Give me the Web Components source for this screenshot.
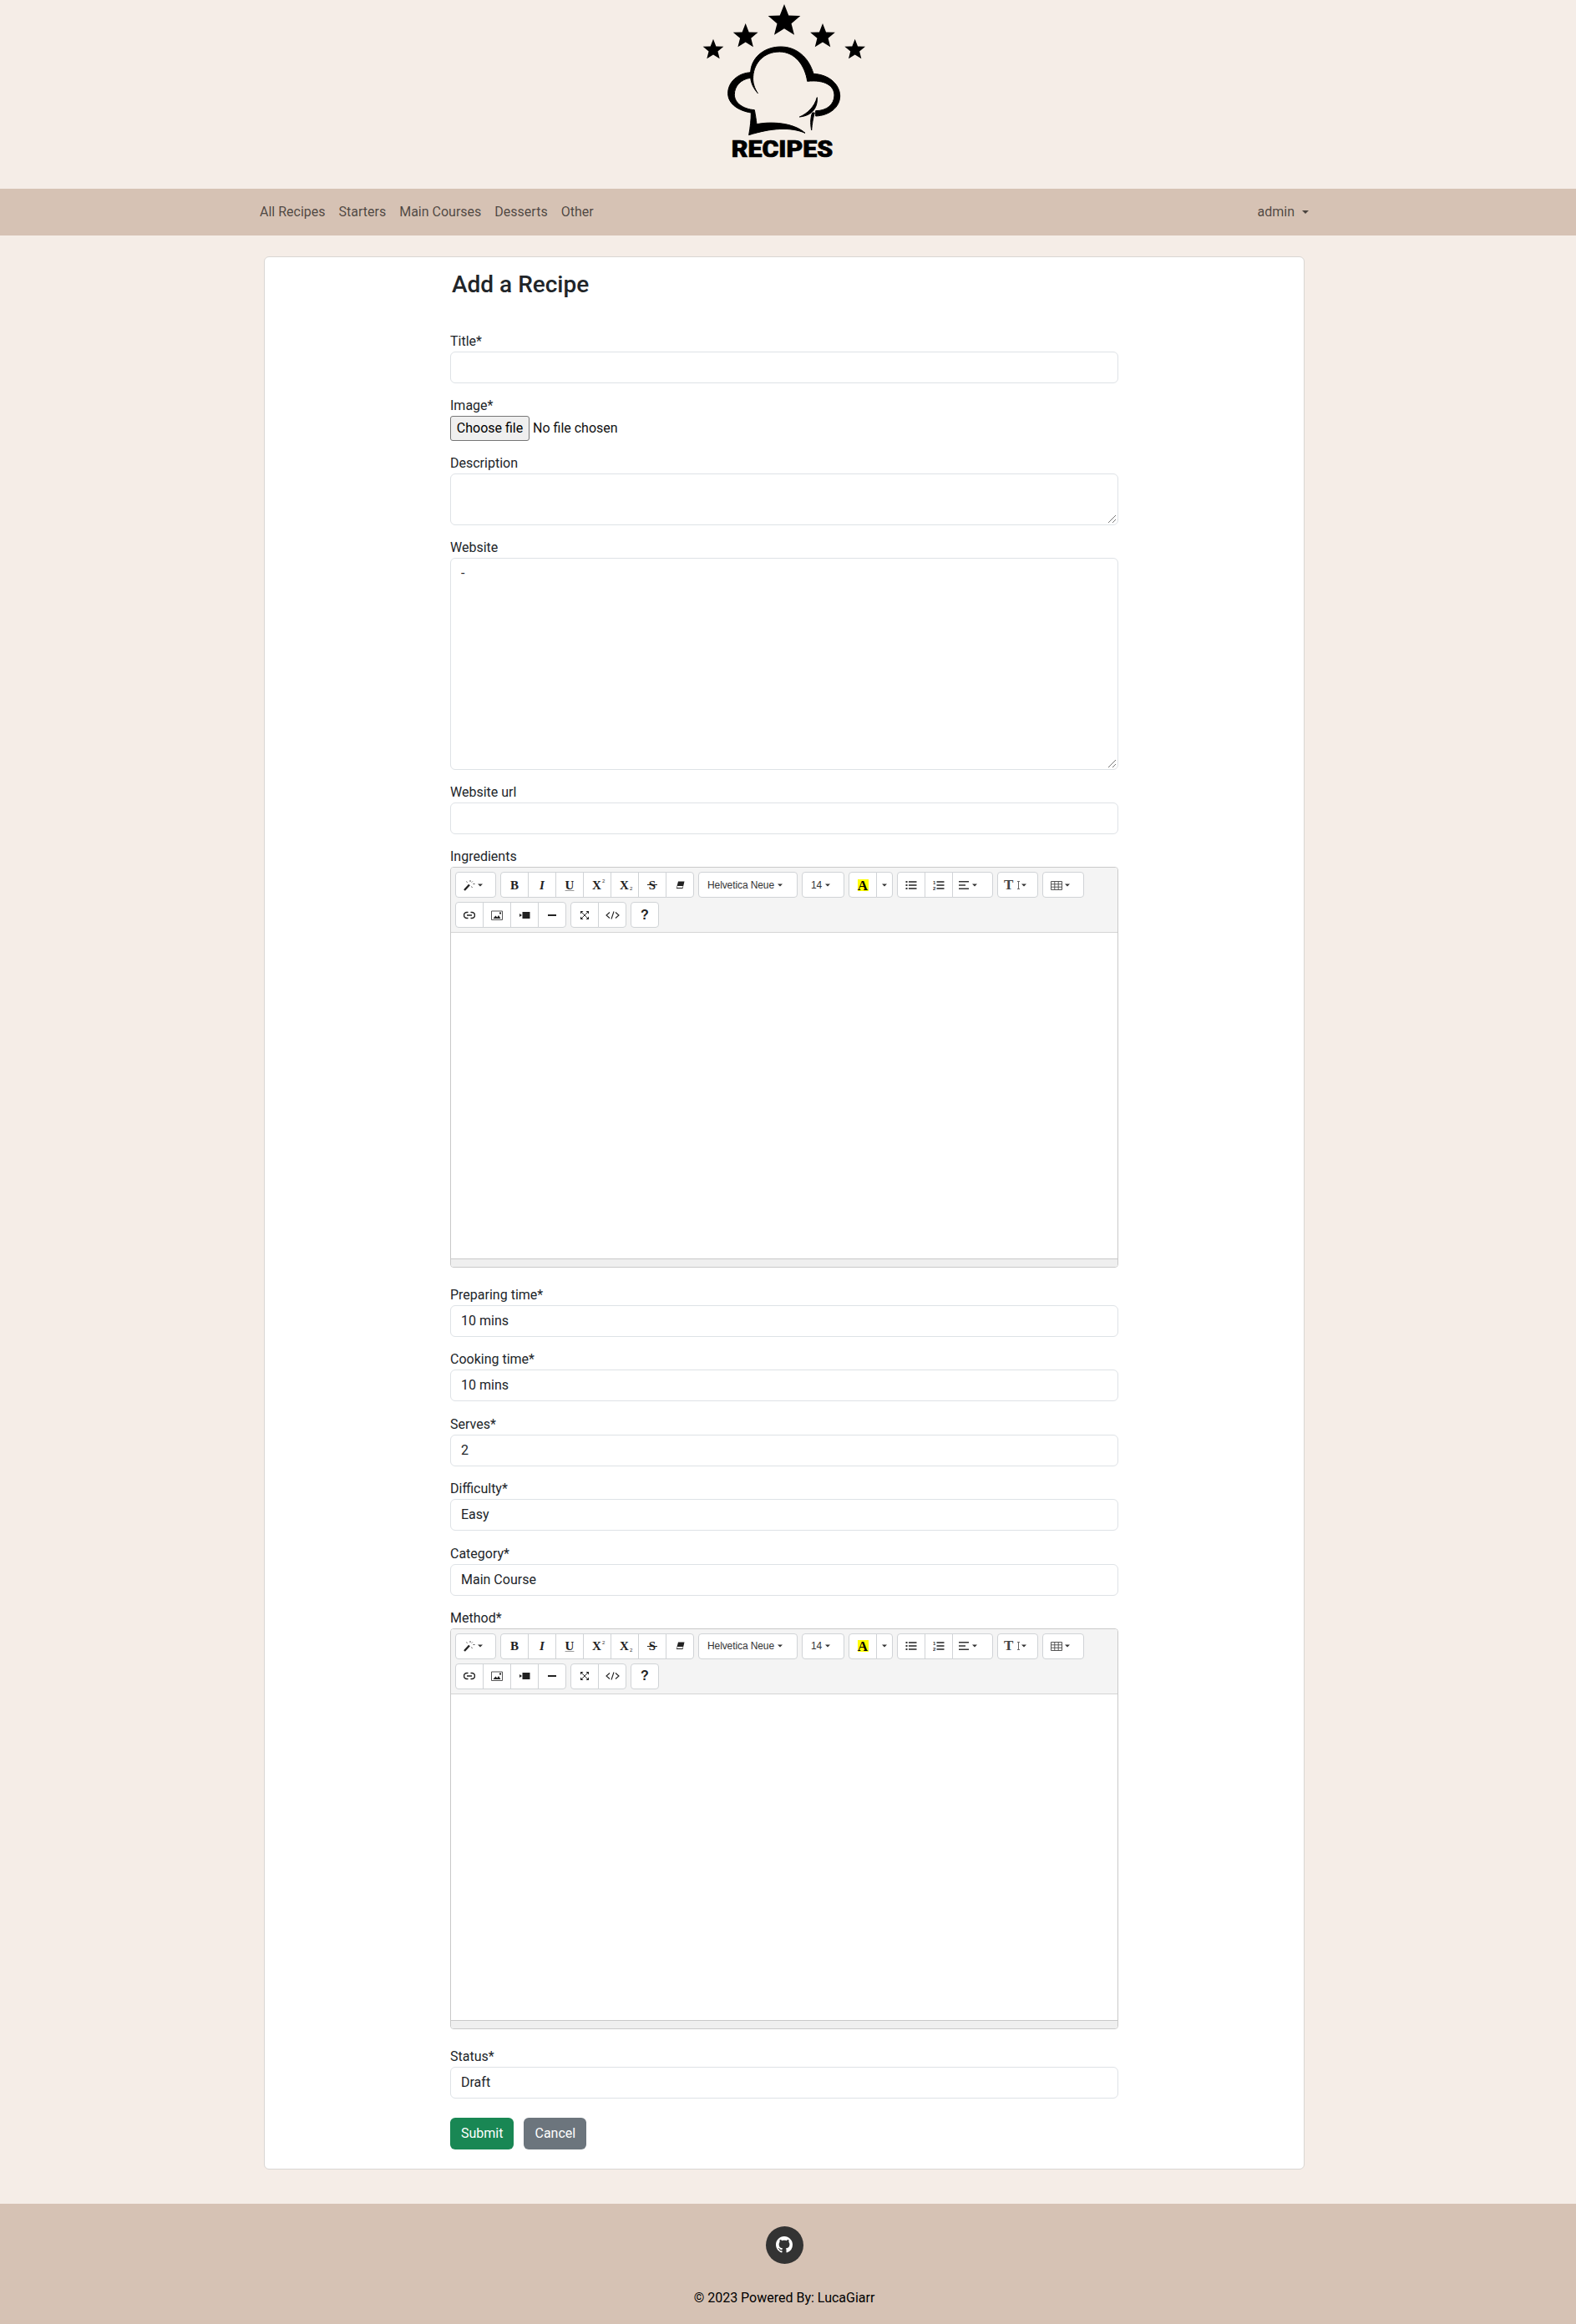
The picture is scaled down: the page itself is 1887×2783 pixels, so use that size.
<!DOCTYPE html>
<html lang="en">
<head>
<meta charset="utf-8">
<title>Add a Recipe</title>
<style>
  html, body { margin: 0; background: #f5ede7; }
  body { font: 16px/24px Roboto, "Liberation Sans", sans-serif; color: #212529; }
  /* the lower rows of the form sit a little further apart */
  .wide { margin-bottom: 15.4px; }
</style>
</head>
<body>
<recipe-header></recipe-header>
<recipe-nav>
  <nav-link>All Recipes</nav-link>
  <nav-link>Starters</nav-link>
  <nav-link>Main Courses</nav-link>
  <nav-link>Desserts</nav-link>
  <nav-link>Other</nav-link>
</recipe-nav>
<recipe-card>
  <form-field label="Title*"></form-field>
  <file-field label="Image*"></file-field>
  <form-field label="Description" area="62"></form-field>
  <form-field label="Website" area="254" value="-"></form-field>
  <form-field label="Website url"></form-field>
  <rich-editor label="Ingredients"></rich-editor>
  <form-field class="wide" label="Preparing time*" value="10 mins"></form-field>
  <form-field class="wide" label="Cooking time*" value="10 mins"></form-field>
  <form-field class="wide" label="Serves*" value="2"></form-field>
  <form-field class="wide" label="Difficulty*" value="Easy"></form-field>
  <form-field class="wide" label="Category*" value="Main Course"></form-field>
  <rich-editor label="Method*"></rich-editor>
  <form-field label="Status*" value="Draft"></form-field>
  <form-actions></form-actions>
</recipe-card>
<recipe-footer></recipe-footer>

<script>
  const caret = `<svg class="caret" width="6" height="4" viewBox="0 0 6 4"><path d="M0 .5h6L3 3.5z" fill="#333"/></svg>`;

  // toolbar icons, drawn on a 14px grid
  const icon = (body, w = 14, h = 14) =>
    `<svg width="${w}" height="${h}" viewBox="0 0 ${w} ${h}" fill="none">${body}</svg>`;

  const icons = {
    magic: icon(`<path d="M1 13l6-6.5" stroke="#222" stroke-width="2.4"/>
      <path d="M8 1v2M3.5 2.5l1 1.3M11.5 5.5h2M9.5 8.5l1 1.500M10.800 2.500l-1 1" stroke="#555"/>`),
    eraser: icon(`<path d="M5 2.5h7.5l-2 8.5H2.800z" fill="#222"/><path d="M4 8h6.800l-.7 2H3.500z" fill="#fff"/>`),
    link: icon(`<path d="M5.5 3.500H4a3.200 3.200 0 0 0 0 7h1.500M8.500 3.500H10a3.200 3.200 0 0 1 0 7H8.500M4 7h6" stroke="#222" stroke-width="1.5"/>`),
    picture: icon(`<path d="M.5 2h13v10.500H.5z" stroke="#555"/><path d="M2.5 11l2.800-3.500 2 2 1.700-2.500 2.500 4z" fill="#222"/><path d="M10 3.500h2v2h-2z" fill="#222"/>`),
    video: icon(`<path d="M1 5l3 2-3 2z" fill="#222"/><path d="M4.500 3h9v8h-9z" fill="#222"/>`),
    minus: icon(`<path d="M2 6h10v2H2z" fill="#222"/>`),
    expand: icon(`<path d="M3.500 3.500l7 7M10.500 3.500l-7 7" stroke="#333"/>
      <path d="M2 2h3.500L2 5.500zM12 2H8.500L12 5.500zM2 12h3.500L2 8.500zM12 12H8.500L12 8.500z" fill="#222"/>`),
    code: icon(`<path d="M5 3.500L1 7l4 3.500M12 3.500L16 7l-4 3.500M10 2.500L7 11.500" stroke="#222" stroke-width="1.1"/>`, 17),
    ul: icon(`<path d="M.5 2h2v2h-2zM.5 6h2v2h-2zM.5 10h2v2h-2z" fill="#333"/><path d="M4 3h9.500M4 7h9.500M4 11h9.500" stroke="#222" stroke-width="1.7"/>`),
    ol: icon(`<text x="0" y="6" font-size="6" font-weight="700" font-family="Liberation Sans" fill="#333">1</text>
      <text x="0" y="13" font-size="6" font-weight="700" font-family="Liberation Sans" fill="#333">2</text>
      <path d="M4.500 3h9M4.500 7h9M4.500 11h9" stroke="#222" stroke-width="1.7"/>`),
    align: icon(`<path d="M1 2.800h12M1 7h8M1 11.200h12" stroke="#333" stroke-width="1.5"/>`),
    table: icon(`<path d="M.5 2.500h13v10H.5zM.5 5.800h13M.5 9.200h13M4.800 2.500v10M9.200 2.500v10" stroke="#555"/>`),
    updown: icon(`<path d="M2 2.500h3M3.500 2.500v9M2 11.500h3" stroke="#666"/>`, 6),
  };

  const serif = (t, extra = "") => `<span class="serif" style="${extra}">${t}</span>`;

  // groups of the summernote toolbar; [width, content, left padding if not centred]
  const toolbarRows = [
    [
      [[49, icons.magic + caret, 9]],
      [
        [34, serif("B")],
        [34, serif("I", "font-style:italic")],
        [34, serif("U", "text-decoration:underline;text-decoration-color:#999")],
        [34, serif("X") + `<sup>2</sup>`],
        [34, serif("X") + `<sub>2</sub>`],
        [34, `<span class="serif strike">S</span>`],
        [34, icons.eraser],
      ],
      [[119, `<span class="txt">Helvetica Neue</span>` + caret, 10]],
      [[51, `<span class="txt">14</span>` + caret, 10]],
      [
        [34, `<span class="color">A</span>`],
        [20, caret],
      ],
      [
        [34, icons.ul],
        [34, icons.ol],
        [49, icons.align + caret, 6],
      ],
      [[49, serif("T", "font-size:17px;color:#444") + `<span class="tight">${icons.updown}</span>` + caret, 7]],
      [[50, icons.table + caret, 9]],
    ],
    [
      [
        [34, icons.link],
        [34, icons.picture],
        [34, icons.video],
        [34, icons.minus],
      ],
      [
        [34, icons.expand],
        [34, icons.code],
      ],
      [[34, `<span class="help">?</span>`]],
    ],
  ];

  customElements.define(
    "recipe-header",
    class extends HTMLElement {
      constructor() {
        super().attachShadow({ mode: "open" });
        const star = (x, y, r) => `<use href="#star" transform="translate(${x} ${y}) scale(${r})"/>`;
        this.shadowRoot.innerHTML = /*html*/ `
          <style>
            :host { display: flex; justify-content: center; height: 226px; padding-right: 9px; }
            svg { display: block; }
            text { font: 900 84px Roboto, "Liberation Sans", sans-serif; }
            .hat { stroke: #000; stroke-width: 3; stroke-linejoin: round; }
          </style>
          <svg width="318" height="226" viewBox="0 0 954 678">
            <defs><path id="star" d="M0-1 .26-.33 .95-.31 .42 .14 .59 .81 0 .44-.59 .81-.42 .14-.95-.31-.26-.33Z"/></defs>
            <rect x="66" width="825" height="678" fill="#f5eee7"/>
            ${star(477, 76, 61)}${star(338, 131, 47)}${star(615, 131, 47)}${star(222, 179, 39)}${star(731, 179, 39)}
            <g class="hat">
              <path d="M350 485C355 455 358 430 358 405C315 398 275 375 275 335C275 295 310 262 358 260L355 280C320 285 298 310 298 340C298 370 330 392 370 395C374 415 376 430 378 446C430 436 510 440 552 478C500 455 430 460 350 485Z"/>
              <path d="M382 335C360 310 352 285 357 250C365 200 410 168 465 168C520 168 565 205 582 265C640 268 677 305 677 345C677 385 640 415 590 417L590 398C630 398 657 375 657 342C657 310 625 285 560 292C552 235 515 186 460 186C405 186 368 225 365 275C363 295 370 318 382 335Z"/>
              <path d="M595 350C597 385 580 415 532 420C560 408 585 385 595 350Z"/>
              <path d="M575 468C570 440 572 420 578 405L586 405C580 425 577 445 575 468Z"/>
            </g>
            <text x="287" y="565" textLength="365" lengthAdjust="spacingAndGlyphs" stroke="#000" stroke-width="2">RECIPES</text>
          </svg>
        `;
      }
    }
  );

  customElements.define(
    "recipe-nav",
    class extends HTMLElement {
      constructor() {
        super().attachShadow({ mode: "open" });
        this.shadowRoot.innerHTML = /*html*/ `
          <style>
            :host { display: block; background: #d6c2b4; padding-right: 9px; color: rgba(0, 0, 0, .65); }
            .bar {
              box-sizing: border-box; width: 1320px; height: 56px; margin: 0 auto; padding: 0 24px;
              display: flex; align-items: center; justify-content: space-between;
            }
            .links { display: flex; }
            .user { display: flex; align-items: center; padding: 0 8px; }
            .user i {
              margin-left: 9px; width: 0; height: 0;
              border: 4.8px solid transparent; border-top-color: currentColor; border-bottom: 0;
            }
          </style>
          <div class="bar">
            <div class="links"><slot></slot></div>
            <div class="user">admin<i></i></div>
          </div>
        `;
      }
    }
  );

  customElements.define(
    "nav-link",
    class extends HTMLElement {
      constructor() {
        super().attachShadow({ mode: "open" });
        this.shadowRoot.innerHTML = `<style>:host { display: block; padding: 0 8px; }</style><slot></slot>`;
      }
    }
  );

  customElements.define(
    "recipe-card",
    class extends HTMLElement {
      constructor() {
        super().attachShadow({ mode: "open" });
        this.shadowRoot.innerHTML = /*html*/ `
          <style>
            :host { display: block; padding: 25px 9px 41px 0; }
            .card {
              box-sizing: border-box; width: 1246px; margin: 0 auto; padding: 16px 0 23px;
              background: #fff; border: 1px solid #d9d6d3; border-radius: 6px;
            }
            .form { width: 800px; margin: 0 auto; }
            h3 { margin: 0 0 39px 2px; font-size: 28px; line-height: 34px; font-weight: 500; }
          </style>
          <div class="card">
            <div class="form">
              <h3>Add a Recipe</h3>
              <slot></slot>
            </div>
          </div>
        `;
      }
    }
  );

  customElements.define(
    "form-field",
    class extends HTMLElement {
      constructor() {
        super().attachShadow({ mode: "open" });
        const area = this.getAttribute("area");
        const value = this.getAttribute("value") || "";
        this.shadowRoot.innerHTML = /*html*/ `
          <style>
            :host { display: block; margin-bottom: 15px; }
            .box {
              position: relative; box-sizing: border-box; height: 38px; padding: 6px 12px;
              border: 1px solid #dee2e6; border-radius: 6px; background: #fff;
            }
            svg { position: absolute; right: 1px; bottom: 1px; }
          </style>
          <div>${this.getAttribute("label")}</div>
          <div class="box" style="${area ? `height:${area}px` : ""}">${value}${area ? `
            <svg width="12" height="12" viewBox="0 0 12 12"><path d="M2 11l9-9M7 11l4-4" stroke="#777"/></svg>` : ""}</div>
        `;
      }
    }
  );

  customElements.define(
    "file-field",
    class extends HTMLElement {
      constructor() {
        super().attachShadow({ mode: "open" });
        this.shadowRoot.innerHTML = /*html*/ `
          <style>
            :host { display: block; margin-bottom: 15px; }
            .row { display: flex; align-items: center; gap: 4px; height: 30px; color: #111; }
            button {
              box-sizing: border-box; width: 95px; height: 30px; padding: 0;
              font: inherit; color: #000; background: #efefef;
              border: 1px solid #767676; border-radius: 3px;
            }
          </style>
          <div>${this.getAttribute("label")}</div>
          <div class="row"><button type="button">Choose file</button><span>No file chosen</span></div>
        `;
      }
    }
  );

  customElements.define(
    "rich-editor",
    class extends HTMLElement {
      constructor() {
        super().attachShadow({ mode: "open" });
        const button = ([w, html, left]) => {
          const align = left === undefined ? "" : `;justify-content:flex-start;padding-left:${left}px`;
          return `<div class="btn" style="width:${w}px${align}">${html}</div>`;
        };
        const rows = toolbarRows.map((groups) => `<div class="row">${groups.map((buttons) =>
          `<div class="group">${buttons.map(button).join("")}</div>`
        ).join("")}</div>`).join("");
        this.shadowRoot.innerHTML = /*html*/ `
          <style>
            :host { display: block; margin-bottom: 21px; }
            .editor { box-sizing: border-box; height: 480px; display: flex; flex-direction: column; border: 1px solid #c9c9c9; border-radius: 4px; }
            .toolbar { padding: 5px; background: #f4f4f4; border-bottom: 1px solid #d4d4d4; border-radius: 3px 3px 0 0; }
            .row { display: flex; gap: 5px; }
            .row + .row { margin-top: 5px; }
            .group { display: flex; }
            .btn {
              box-sizing: border-box; height: 31px; display: flex; align-items: center; justify-content: center; gap: 3px;
              background: #fff; border: 1px solid #d0d3d6;
              font: 12px/14px "Liberation Sans", sans-serif; color: #333;
            }
            .btn + .btn { margin-left: -1px; }
            .btn:first-child { border-radius: 4px 0 0 4px; }
            .btn:last-child { border-radius: 0 4px 4px 0; }
            .btn:only-child { border-radius: 4px; }
            .serif { font: 700 15px/16px "Liberation Serif", serif; color: #222; }
            .strike { padding: 0 2px; background: linear-gradient(#222, #222) center / 100% 1px no-repeat; }
            sup, sub { width: 0; font-size: 6px; line-height: 6px; margin-left: -2px; }
            sup { align-self: flex-start; margin-top: 7px; }
            sub { align-self: flex-end; margin-bottom: 7px; }
            .txt { letter-spacing: -.1px; margin-right: 1px; }
            .tight { margin-right: -2px; }
            .color { width: 13px; height: 14px; background: #ff0; color: #000; font: 700 17px/15px "Liberation Serif", serif; text-align: center; }
            .help { font: 700 16px/16px "Liberation Sans", sans-serif; color: #222; }
            svg { display: block; }
            .body { flex: 1; background: #fff; }
            .status { box-sizing: border-box; height: 10px; background: #efefef; border-top: 1px solid #c9c9c9; border-radius: 0 0 3px 3px; }
          </style>
          <div>${this.getAttribute("label")}</div>
          <div class="editor">
            <div class="toolbar">${rows}</div>
            <div class="body"></div>
            <div class="status"></div>
          </div>
        `;
      }
    }
  );

  customElements.define(
    "form-actions",
    class extends HTMLElement {
      constructor() {
        super().attachShadow({ mode: "open" });
        this.shadowRoot.innerHTML = /*html*/ `
          <style>
            :host { display: flex; gap: 12px; padding-top: 8px; }
            span { box-sizing: border-box; height: 38px; padding: 7px 13px 5px; border-radius: 6px; color: #fff; }
            .ok { background: #198754; }
            .no { background: #6c757d; }
          </style>
          <span class="ok">Submit</span>
          <span class="no">Cancel</span>
        `;
      }
    }
  );

  customElements.define(
    "recipe-footer",
    class extends HTMLElement {
      constructor() {
        super().attachShadow({ mode: "open" });
        this.shadowRoot.innerHTML = /*html*/ `
          <style>
            :host {
              display: flex; flex-direction: column; align-items: center; box-sizing: border-box; height: 144px;
              padding: 27px 9px 0 0; background: #d6c2b4; color: #000;
            }
            .gh { width: 45px; height: 45px; border-radius: 50%; background: #333; display: flex; align-items: center; justify-content: center; }
            p { margin: 29px 0 0; }
          </style>
          <div class="gh">
            <svg width="20" height="20" viewBox="0 0 16 16" fill="#fff"><path d="M8 0C3.580 0 0 3.580 0 8c0 3.540 2.290 6.530 5.470 7.590.4.070.55-.17.55-.38 0-.19-.01-.82-.01-1.490-2.010.37-2.530-.49-2.690-.94-.09-.23-.48-.94-.82-1.130-.28-.15-.68-.52-.01-.53.630-.01 1.080.58 1.230.82.720 1.210 1.870.870 2.330.660.070-.52.280-.870.510-1.070-1.780-.2-3.640-.89-3.640-3.950 0-.870.310-1.590.820-2.150-.080-.2-.360-1.020.080-2.120 0 0 .670-.210 2.200.820.640-.180 1.320-.270 2-.270s1.360.090 2 .270c1.530-1.040 2.200-.820 2.200-.820.440 1.100.160 1.920.080 2.120.510.560.820 1.270.820 2.150 0 3.070-1.870 3.750-3.650 3.950.290.250.540.730.540 1.480 0 1.070-.010 1.930-.010 2.200 0 .210.150.460.550.380A8.010 8.010 0 0 0 16 8c0-4.420-3.580-8-8-8z"/></svg>
          </div>
          <p>© 2023 Powered By: LucaGiarr</p>
        `;
      }
    }
  );
</script>
</body>
</html>
